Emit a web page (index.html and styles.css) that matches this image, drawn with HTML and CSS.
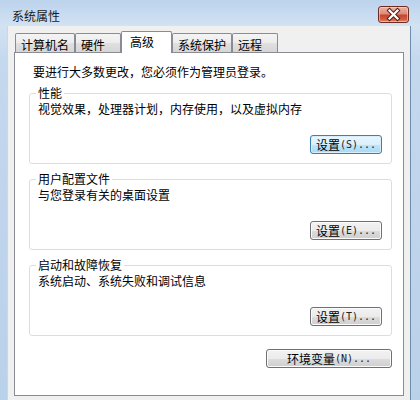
FILE: index.html
```html
<!DOCTYPE html>
<html lang="zh-CN">
<head>
<meta charset="utf-8">
<title>系统属性</title>
<link rel="stylesheet" href="styles.css">
</head>
<body>
<div class="window">
  <div class="titlebar">
    <span class="title">系统属性</span>
    <div class="close">
      <svg width="29" height="15" viewBox="0 0 29 15">
        <path d="M10.5 3.5 L18.5 11.5 M18.5 3.5 L10.5 11.5" stroke="#5a1d14" stroke-width="4.2" stroke-linecap="square" fill="none"/>
        <path d="M10.5 3.5 L18.5 11.5 M18.5 3.5 L10.5 11.5" stroke="#ffffff" stroke-width="2.2" stroke-linecap="square" fill="none"/>
      </svg>
    </div>
  </div>
  <div class="client">
    <div class="tabs">
      <div class="tab">计算机名</div>
      <div class="tab">硬件</div>
      <div class="tab selected">高级</div>
      <div class="tab">系统保护</div>
      <div class="tab">远程</div>
    </div>
    <div class="panel">
      <p class="intro">要进行大多数更改，您必须作为管理员登录。</p>
      <fieldset class="group">
        <legend>性能</legend>
        <p class="desc">视觉效果，处理器计划，内存使用，以及虚拟内存</p>
        <div class="btnrow"><button class="btn default">设置<span class="lat">(S)...</span></button></div>
      </fieldset>
      <fieldset class="group">
        <legend>用户配置文件</legend>
        <p class="desc">与您登录有关的桌面设置</p>
        <div class="btnrow"><button class="btn">设置<span class="lat">(E)...</span></button></div>
      </fieldset>
      <fieldset class="group">
        <legend>启动和故障恢复</legend>
        <p class="desc">系统启动、系统失败和调试信息</p>
        <div class="btnrow"><button class="btn">设置<span class="lat">(T)...</span></button></div>
      </fieldset>
      <div class="envrow"><button class="btn wide">环境变量<span class="lat">(N)...</span></button></div>
    </div>
  </div>
</div>
</body>
</html>
```

FILE: styles.css
```css
* { box-sizing: border-box; }
html, body {
  margin: 0;
  padding: 0;
  width: 420px;
  height: 400px;
  overflow: hidden;
}
body {
  font-family: "Noto Sans CJK SC", "Noto Sans", sans-serif;
  font-size: 12px;
  color: #000;
}
.window {
  width: 420px;
  height: 400px;
  display: flex;
  flex-direction: column;
  background: linear-gradient(to bottom, #bcd3ec 0px, #c8dbf0 14px, #d2e2f3 26px, #c4d8ee 60px, #bad1ea 400px);
}
.titlebar {
  height: 26px;
  flex: none;
  display: flex;
  align-items: flex-start;
  padding: 8px 11px 0 12px;
}
.title {
  line-height: 16px;
  color: #1a1a1a;
}
.close {
  margin-left: auto;
  margin-top: -2px;
  width: 31px;
  height: 17px;
  border: 1px solid #6e2b22;
  border-radius: 3px;
  background: linear-gradient(to bottom, #eab2a5 0%, #dc8c7a 45%, #c7462f 55%, #cf5a40 80%, #e08a6c 100%);
  box-shadow: inset 0 0 0 1px rgba(255, 220, 210, 0.55);
  display: flex;
  align-items: center;
  justify-content: center;
}
.close svg { display: block; }
.client {
  flex: 1;
  margin-left: 7px;
  width: 404px;
  background: #f0f0f0;
  border-right: 1px solid #6f8cab;
  border-left: 1px solid #c9d8e8;
  padding: 5px 6px 0 6px;
}
.tabs {
  display: flex;
  align-items: flex-end;
  height: 21px;
  padding-left: 1px;
}
.tab {
  height: 19px;
  min-width: 46px;
  padding: 3px 5px 0 5px;
  line-height: 15px;
  border: 1px solid #898c95;
  border-bottom: none;
  border-radius: 2px 2px 0 0;
  background: linear-gradient(to bottom, #f4f4f4 0%, #ececec 50%, #e0e0e0 51%, #d6d6d6 100%);
  white-space: nowrap;
}
.tab.selected {
  position: relative;
  z-index: 1;
  height: 22px;
  min-width: 51px;
  margin-bottom: -1px;
  padding: 2px 5px 0 8px;
  background: #fff;
}
.panel {
  height: 344px;
  background: #fff;
  border: 1px solid #898c95;
  padding: 11px 11px 0 14px;
}
.intro {
  margin: 0 0 0 4px;
  line-height: 16px;
}
.group {
  margin: 5px 0 0 0;
  padding: 0 9px 9px 6px;
  border: 1px solid #d5dfe5;
  border-radius: 3px;
  min-width: 0;
}
.group + .group { margin-top: 7px; }
.group legend {
  padding: 0 2px;
  line-height: 16px;
}
.desc {
  margin: 0;
  padding-left: 2px;
  line-height: 16px;
}
.btnrow {
  display: flex;
  justify-content: flex-end;
  margin-top: 18px;
}
.envrow {
  display: flex;
  justify-content: flex-end;
  margin-top: 13px;
}
.btn {
  font-family: "Noto Sans CJK SC", "Noto Sans", sans-serif;
  font-size: 12px;
  color: #000;
  width: 72px;
  height: 19px;
  padding: 0;
  line-height: 16px;
  border: 1px solid #707070;
  border-radius: 3px;
  background: linear-gradient(to bottom, #f2f2f2 0%, #ebebeb 50%, #dddddd 51%, #cfcfcf 100%);
  box-shadow: inset 0 0 0 1px #fbfbfb;
  display: flex;
  align-items: center;
  justify-content: center;
  white-space: nowrap;
}
.btn.default {
  border-color: #3c7fb1;
  background: linear-gradient(to bottom, #eaf6fd 0%, #d9f0fc 50%, #bee6fd 51%, #a7d9f5 100%);
  box-shadow: inset 0 0 0 1px #d8eefb;
}
.btn.wide { width: 126px; }
.lat {
  font-family: "DejaVu Sans Mono", "Liberation Mono", monospace;
  font-size: 10px;
  color: #222;
}
```
